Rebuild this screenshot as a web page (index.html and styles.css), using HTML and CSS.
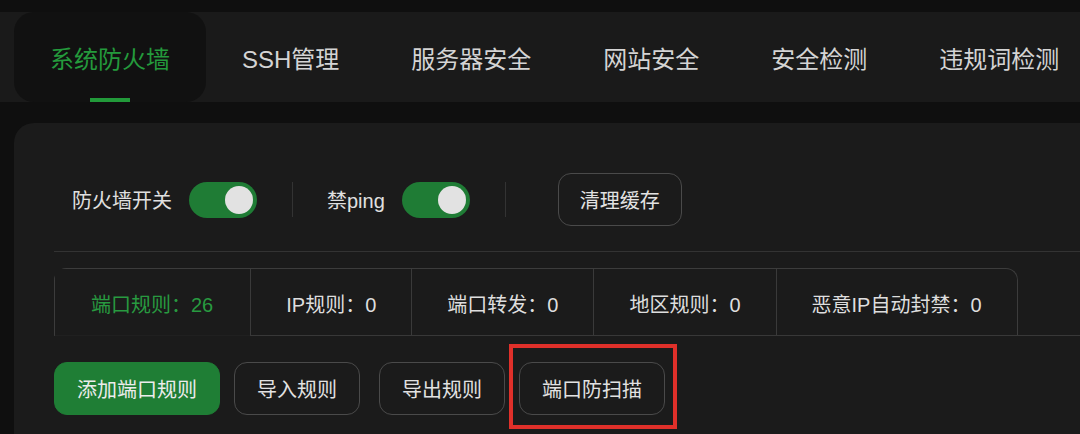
FILE: index.html
```html
<!DOCTYPE html>
<html lang="zh-CN">
<head>
    <meta charset="UTF-8">
    <meta name="viewport" content="width=device-width, initial-scale=1.0">
    <title>系统防火墙</title>
    <link rel="stylesheet" href="styles.css">
</head>
<body>
    <nav class="main-nav">
        <a class="nav-item active">系统防火墙</a>
        <a class="nav-item">SSH管理</a>
        <a class="nav-item">服务器安全</a>
        <a class="nav-item">网站安全</a>
        <a class="nav-item">安全检测</a>
        <a class="nav-item">违规词检测</a>
    </nav>

    <section class="card">
        <div class="switch-row">
            <span class="switch-label">防火墙开关</span>
            <span class="toggle on"><span class="knob"></span></span>
            <span class="divider"></span>
            <span class="switch-label">禁ping</span>
            <span class="toggle on"><span class="knob"></span></span>
            <span class="divider"></span>
            <button class="btn btn-clear">清理缓存</button>
        </div>

        <div class="rule-tabs">
            <div class="rule-group">
                <div class="rule-tab active">端口规则：26</div>
                <div class="rule-tab">IP规则：0</div>
                <div class="rule-tab">端口转发：0</div>
                <div class="rule-tab">地区规则：0</div>
                <div class="rule-tab">恶意IP自动封禁：0</div>
            </div>
        </div>

        <div class="actions">
            <button class="btn btn-primary">添加端口规则</button>
            <button class="btn">导入规则</button>
            <button class="btn btn-export">导出规则</button>
            <span class="highlight">
                <button class="btn">端口防扫描</button>
            </span>
        </div>
    </section>
</body>
</html>
```

FILE: styles.css
```css
body {
    margin: 0;
    background: #0f0f0f;
    font-family: "Liberation Sans", "Noto Sans CJK SC", sans-serif;
    color: #dcdcdc;
    overflow: hidden;
}

.main-nav {
    display: flex;
    height: 90px;
    margin-top: 12px;
    padding-left: 14px;
    background: #1a1a1a;
    overflow: hidden;
}

.nav-item {
    position: relative;
    flex-shrink: 0;
    display: flex;
    align-items: center;
    padding: 1px 36px 0;
    font-size: 24px;
    white-space: nowrap;
    color: #d4d4d4;
    cursor: pointer;
}

.nav-item.active {
    background: #111111;
    border-radius: 20px;
    color: #249a3c;
}

.nav-item.active::after {
    content: "";
    position: absolute;
    left: 50%;
    bottom: 0;
    width: 40px;
    height: 4px;
    margin-left: -20px;
    background: #229a3a;
}

.card {
    margin: 21px 0 0 14px;
    padding: 50px 0 40px 40px;
    background: #1b1b1b;
    border-radius: 20px 0 0 0;
}

.switch-row {
    display: flex;
    align-items: center;
    padding-left: 18px;
    padding-bottom: 25px;
    border-bottom: 1px solid #333333;
}

.switch-label {
    font-size: 20px;
    white-space: nowrap;
    color: #e0e0e0;
}

.toggle {
    display: flex;
    align-items: center;
    justify-content: flex-end;
    width: 68px;
    height: 36px;
    margin-left: 17px;
    padding: 0 4px;
    box-sizing: border-box;
    border-radius: 18px;
    background: #1f7c35;
}

.knob {
    width: 28px;
    height: 28px;
    border-radius: 50%;
    background: #e2e2e2;
}

.divider {
    width: 1px;
    height: 35px;
    margin: 0 34px 0 35px;
    background: #333333;
}

.btn {
    height: 53px;
    padding: 0 22px;
    border: 1px solid #4a4a4a;
    border-radius: 13px;
    background: transparent;
    color: #e2e2e2;
    font-family: inherit;
    font-size: 20px;
    white-space: nowrap;
    cursor: pointer;
}

.btn-clear {
    margin-left: 18px;
    padding: 0 21px;
}

.rule-tabs {
    display: flex;
    margin-top: 16px;
    border-bottom: 1px solid #383838;
}

.rule-group {
    display: flex;
    border: 1px solid #3c3c3c;
    border-bottom: none;
    border-radius: 12px 12px 0 0;
}

.rule-tab {
    display: flex;
    align-items: center;
    height: 66px;
    padding: 2px 35px 0;
    box-sizing: border-box;
    font-size: 20px;
    white-space: nowrap;
    color: #dedede;
}

.rule-tab + .rule-tab {
    border-left: 1px solid #3a3a3a;
}

.rule-tab.active {
    color: #289a40;
    height: 67px;
    margin-bottom: -1px;
    padding-left: 36px;
    padding-right: 37px;
    background: #1b1b1b;
    border-bottom: 1px solid #202020;
}

.actions {
    display: flex;
    align-items: center;
    gap: 14px;
    margin-top: 26px;
}

.btn-primary {
    background: #1f7e35;
    border-color: #1f7e35;
    color: #ececec;
}

.btn-export {
    margin-left: 5px;
}

.highlight {
    position: relative;
    display: flex;
}

.highlight::after {
    content: "";
    position: absolute;
    top: -18px;
    bottom: -14px;
    left: -10px;
    right: -12px;
    border: 4px solid #e0302a;
}
```
